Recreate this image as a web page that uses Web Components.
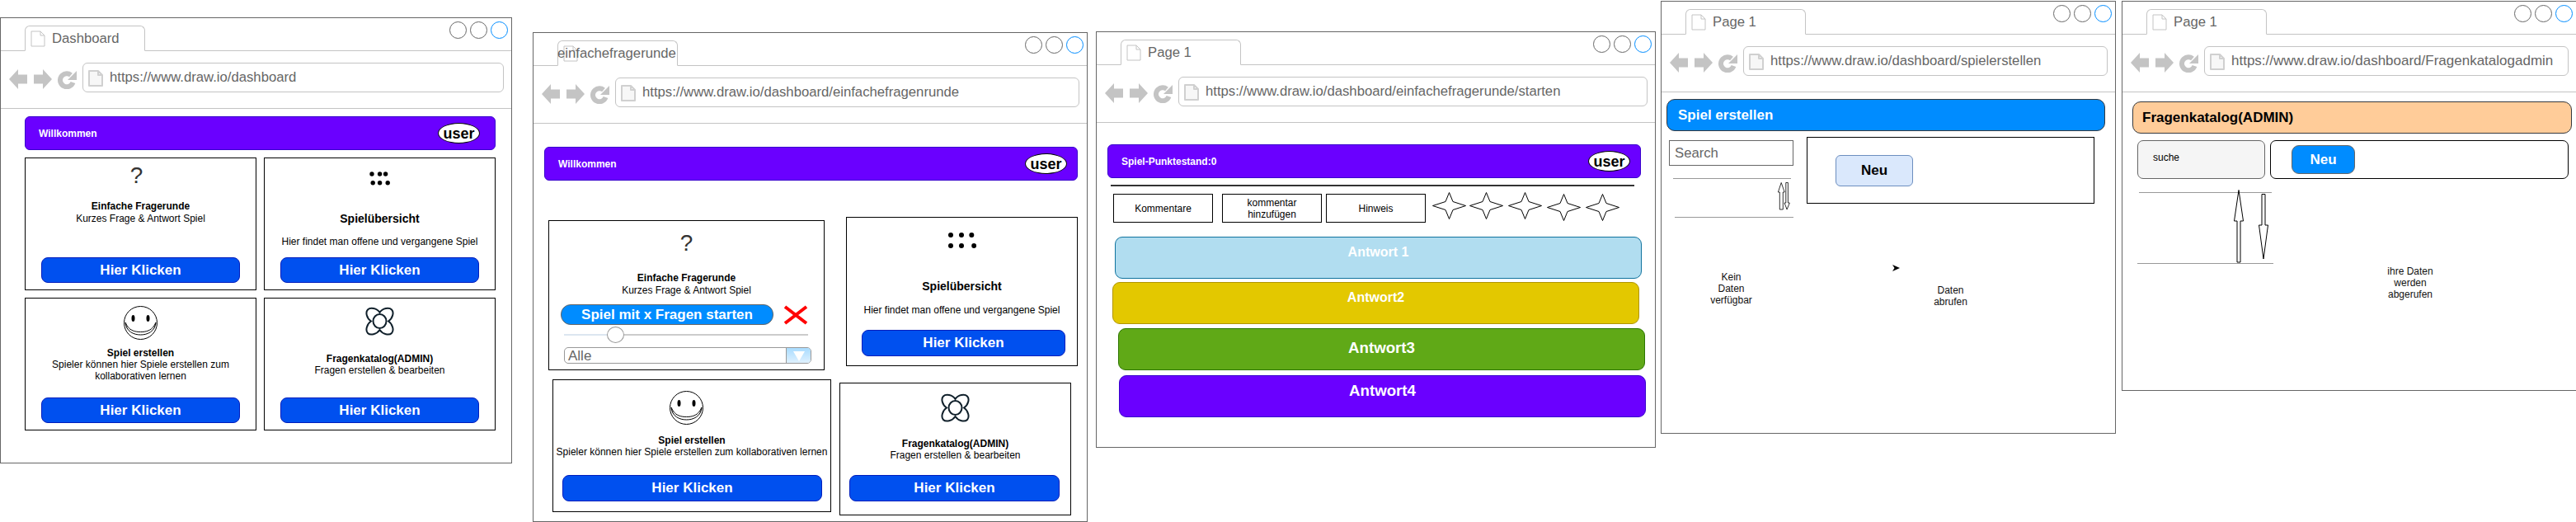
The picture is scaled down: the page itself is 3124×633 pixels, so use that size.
<!DOCTYPE html>
<html lang="de">
  <head>
    <meta charset="UTF-8">
    <title>Wireframes</title>
    <style>
      html, body { margin: 0; height: 633px; overflow: hidden; background: #fff; }
      body { position: relative; font: 12px/14px "Liberation Sans", Arial, sans-serif; color: #000; }
      .row { display: flex; align-items: flex-start; }
    </style>
    <script>
      const sheet = `
        :host { box-sizing: border-box; }
        *, *::before, *::after { box-sizing: border-box; }
      `;
      const page = (stroke, width, fill) => `
        <svg width="18" height="20" viewBox="0 0 18 20">
          <path d="M1 1H12L17 6V19H1Z M12 1V6H17" fill="${fill}" stroke="${stroke}" stroke-width="${width}" stroke-linejoin="round"/>
        </svg>`;

      // tiny base class, every element here is just a template in an open shadow root
      const element = (name, html) => customElements.define(name, class extends HTMLElement {
        constructor() {
          super();
          this.attachShadow({ mode: 'open' }).innerHTML = `<style>${sheet}</style>` + html;
        }
      });

      customElements.define('desk-window', class extends HTMLElement {
        constructor() {
          super();
          this.attachShadow({ mode: 'open' }).innerHTML = `
            <style>
              ${sheet}
              :host {
                position: absolute;
                left: var(--win-x); top: var(--win-y); width: var(--win-w); height: var(--win-h);
                display: flex; flex-direction: column;
                border: 1px solid #666; background: #fff;
              }
              .tabs { display: flex; height: 40px; border-bottom: 1px solid #c4c4c4; flex: none; }
              .tab {
                display: flex; align-items: center;
                margin: 9px 0 0 29px; padding-left: 6px;
                width: 146px; height: 31px;
                border: 1px solid #c4c4c4; border-bottom-color: #fff; border-radius: 6px 6px 0 0;
                font-size: 16.7px; color: #666; white-space: nowrap;
              }
              .tab span { margin-left: var(--tab-gap, 8px); }
              .dots { display: flex; gap: 4px; margin: 4px 4px 0 auto; }
              .dots i { width: 21px; height: 21px; border: 1px solid #666; border-radius: 50%; }
              .dots i:last-child { border-color: #008cff; }
              .bar { display: flex; align-items: flex-start; height: 70px; padding: 14px 9px 0 10px; border-bottom: 1px solid #c4c4c4; flex: none; }
              .nav { margin: 8px 6px 0 0; flex: none; }
              .url {
                flex: 1; display: flex; align-items: center; gap: 8px;
                height: 36px; padding: 0 6px; margin-left: 0;
                border: 1px solid #c4c4c4; border-radius: 6px;
                font-size: var(--url-size, 16.7px); color: #666; white-space: nowrap;
              }
              .url svg { margin-top: 2px; flex: none; }
              main { flex: 1; display: block; }
            </style>
            <div class="tabs">
              <div class="tab">${page('#c4c4c4', 1, '#fff')}<span></span></div>
              <div class="dots"><i></i><i></i><i></i></div>
            </div>
            <div class="bar">
              <svg class="nav" width="83" height="24" viewBox="0 0 83 24" fill="#c4c4c4">
                <path d="M0 12 11 0V6.500H22V17.500H11V24Z"/>
                <path d="M52 12 41 0V6.500H30V17.500H41V24Z"/>
                <path d="M77.500 16A8 8 0 1 1 75 7" fill="none" stroke="#c4c4c4" stroke-width="6"/>
                <path d="M82 2V13H71Z"/>
              </svg>
              <div class="url">${page('#d0d0d0', 2, '#f7f7f7')}<span></span></div>
            </div>
            <main><slot></slot></main>
          `;
        }
        connectedCallback() {
          this.shadowRoot.querySelector('.tab span').textContent = this.getAttribute('tab');
          this.shadowRoot.querySelector('.url span').textContent = this.getAttribute('url');
        }
      });

      element('top-banner', `
        <style>
          :host {
            display: flex; align-items: center; justify-content: space-between;
            height: var(--h, 41px);
            padding: 0 var(--pr, 18px) 0 var(--pl, 16px);
            background: var(--bg, #6a00ff);
            border: 1px solid var(--bd, #3700cc);
            border-radius: var(--r, 6px);
            color: var(--fg, #fff);
            font-weight: bold; font-size: var(--fs, 12px); white-space: nowrap;
          }
        </style>
        <slot></slot><slot name="end"></slot>
      `);

      element('user-badge', `
        <style>
          :host {
            display: flex; align-items: center; justify-content: center;
            width: 51px; height: 25px;
            background: #fff; border: 1px solid #000; border-radius: 50%;
            color: #000; font-size: 18px; font-weight: bold;
          }
        </style>
        <slot></slot>
      `);

      element('click-button', `
        <style>
          :host {
            display: flex; align-items: center; justify-content: center;
            width: var(--bw, 241px); height: var(--bh, 31px);
            margin-left: var(--bx, 19px);
            background: #0050ef; border: 1px solid #001dbc; border-radius: 8px;
            color: #fff; font-size: 17px; font-weight: bold;
          }
        </style>
        <slot>Hier Klicken</slot>
      `);

      element('feature-card', `
        <style>
          :host {
            display: flex; flex-direction: column; flex: none;
            width: var(--w); height: var(--h);
            border: 1px solid #000; background: #fff;
            text-align: center;
          }
          .head { height: var(--head); padding-top: var(--it); display: flex; justify-content: center; flex: none; }
          slot[name=title] { display: block; font-weight: bold; font-size: var(--ts, 12px); line-height: 14px; }
          .body { display: block; margin-top: var(--gap, 0); line-height: 14px; }
          .action { margin-top: auto; padding-bottom: var(--pb, 8px); }
        </style>
        <div class="head"><slot name="icon"></slot></div>
        <slot name="title"></slot>
        <div class="body"><slot></slot></div>
        <div class="action"><slot name="action"><click-button></click-button></slot></div>
      `);

      element('quest-mark', `
        <style>:host { display: block; font-size: 28px; line-height: 29px; height: 29px; color: #333; }</style>?
      `);

      element('dot-grid', `
        <style>:host { display: block; height: 17px; } svg { display: block; }</style>
        <svg width="25" height="17"><g fill="#000">
          <circle cx="3" cy="3" r="2.700"/><circle cx="12.600" cy="3" r="2.700"/><circle cx="19.600" cy="3" r="2.700"/>
          <circle cx="4.200" cy="13.700" r="2.700"/><circle cx="12.600" cy="13.700" r="2.700"/><circle cx="22.200" cy="13.700" r="2.700"/>
        </g></svg>
      `);

      element('dot-grid-wide', `
        <style>:host { display: block; height: 19px; } svg { display: block; }</style>
        <svg width="34" height="19"><g fill="#000">
          <circle cx="3" cy="3" r="3"/><circle cx="16" cy="3" r="3"/><circle cx="28.300" cy="3" r="3"/>
          <circle cx="3" cy="16" r="3"/><circle cx="16" cy="16" r="3"/><circle cx="31.200" cy="16" r="3"/>
        </g></svg>
      `);

      element('smile-face', `
        <style>:host { display: block; height: 41px; } svg { display: block; }</style>
        <svg width="41" height="41" viewBox="0 0 41 41" fill="none" stroke="#000">
          <ellipse cx="20.500" cy="20.500" rx="20" ry="20"/>
          <ellipse cx="11.500" cy="15" rx="2" ry="4" fill="#000" stroke="none"/>
          <ellipse cx="29.500" cy="15" rx="2" ry="4" fill="#000" stroke="none"/>
          <path d="M2 20C3 31 12 35 20.500 35S38 31 39 20"/>
          <path d="M2 20 4 24C8 30 14 31.500 20.500 31.500S33 30 37 24L39 20"/>
        </svg>
      `);

      element('clover-mark', `
        <style>:host { display: block; height: 35px; } svg { display: block; }</style>
        <svg width="35" height="35" viewBox="0 0 35 35" fill="none" stroke="#10202b" stroke-width="2">
          <path d="M17.500 7C14 1.500 6 .5 3 3.500S1.500 14 7 17.500C1.500 21 0 29 3 32S14 33.500 17.500 28C21 33.500 29 35 32 32S33.500 21 28 17.500C33.500 14 35 6.500 32 3.500S21 1.500 17.500 7Z"/>
          <ellipse cx="17.500" cy="17.500" rx="8" ry="8.500"/>
        </svg>
      `);

      element('quiz-start', `
        <style>
          :host { display: block; padding-left: 14px; margin-bottom: -1px; }
          .go { display: flex; align-items: center; }
          .start {
            display: flex; align-items: center; justify-content: center;
            width: 258px; height: 25px;
            background: #008cff; border: 1px solid #666; border-radius: 12px;
            color: #fff; font-size: 17px; font-weight: bold; white-space: nowrap;
          }
          .go svg { margin-left: 12px; }
          .slider { position: relative; width: 296px; height: 20px; margin: 2px 0 0 4px; }
          .slider::before { content: ""; position: absolute; left: 0; right: 0; top: 9px; height: 2px; background: #ccc; }
          .slider::after { content: ""; position: absolute; left: 0; width: 52px; top: 9px; height: 2px; background: #dce6f0; }
          .slider i { position: absolute; z-index: 1; left: 52px; top: 0; width: 21px; height: 20px; background: #fff; border: 1px solid #999; border-radius: 50%; }
          .select {
            display: flex; width: 300px; height: 20px; margin: 5px 0 0 4px;
            border: 1px solid #999; border-radius: 5px; overflow: hidden;
            color: #666; font-size: 17px; line-height: 20px; text-align: left;
          }
          .select span { flex: 1; padding-left: 4px; }
          .select b { width: 30px; border-left: 1px solid #999; background: linear-gradient(#a9dcff, #dff1ff); display: flex; align-items: center; justify-content: center; }
        </style>
        <div class="go">
          <div class="start"><slot></slot></div>
          <svg width="30" height="24" viewBox="0 0 30 24"><path d="M2 2 28 22M28 2 2 22" stroke="#f00" stroke-width="4"/></svg>
        </div>
        <div class="slider"><i></i></div>
        <div class="select"><span>Alle</span><b><svg width="16" height="13"><path d="M1 1H15L8 13Z" fill="#fff"/></svg></b></div>
      `);

      element('small-box', `
        <style>
          :host {
            display: flex; align-items: center; justify-content: center;
            width: 121px; height: 35px; flex: none;
            border: 1px solid #000; text-align: center;
          }
        </style>
        <slot></slot>
      `);

      element('four-star', `
        <style>:host { display: block; flex: none; height: 32px; } svg { display: block; }</style>
        <svg width="41" height="33" viewBox="0 0 41 33"><path d="M20.500 .5 25 11.500 40.500 16.500 25 21.500 20.500 32.500 16 21.500 .5 16.500 16 11.500Z" fill="#fff" stroke="#000"/></svg>
      `);

      element('answer-row', `
        <style>
          :host {
            display: block; flex: none;
            width: 639px; height: 51px;
            padding-top: var(--pt, 9px);
            background: var(--bg); border: 1px solid var(--bd); border-radius: 9px;
            color: #fff; font-weight: bold; font-size: var(--fs, 16px); line-height: var(--lh, 18px);
            text-align: center;
          }
        </style>
        <slot></slot>
      `);

      element('search-field', `
        <style>
          :host {
            display: flex; align-items: center;
            width: 151px; height: 31px; padding-left: 6px;
            border: 1px solid #666; background: #fff;
            color: #666; font-size: 16.7px;
          }
        </style>
        <slot></slot>
      `);

      element('sort-list', `
        <style>
          :host { display: block; position: relative; width: var(--w); height: var(--h); flex: none; }
          i { position: absolute; height: 1px; background: #999; }
          .top { top: 0; left: var(--tl); width: var(--tw); }
          .bottom { bottom: 0; left: var(--bl); width: var(--bw); }
          ::slotted(svg) { position: absolute; }
        </style>
        <i class="top"></i><slot></slot><i class="bottom"></i>
      `);

      element('new-button', `
        <style>
          :host {
            display: flex; align-items: center; justify-content: center;
            width: var(--bw); height: var(--bh);
            margin: var(--bm);
            background: var(--bg); border: 1px solid var(--bd); border-radius: var(--r, 6px);
            color: var(--fg); font-size: 17px; font-weight: bold;
          }
        </style>
        <slot></slot>
      `);

      element('note-text', `
        <style>:host { display: block; text-align: center; line-height: 14px; color: #111; }</style>
        <slot></slot>
      `);
    </script>
  </head>
  <body>
    <desk-window tab="Dashboard" url="https://www.draw.io/dashboard" style="--win-x:0px;--win-y:21px;--win-w:621px;--win-h:541px">
      <div style="padding:9px 0 0 29px;width:600px;box-sizing:border-box;display:grid;grid-template-columns:281px 281px;gap:9px 9px">
        <top-banner style="grid-column:1/3;width:571px">Willkommen<user-badge slot="end">user</user-badge></top-banner>
        <feature-card style="--w:281px;--h:161px;--it:6px;--head:51px;--gap:1px">
          <quest-mark slot="icon" style="margin-right:10px"></quest-mark>
          <span slot="title">Einfache Fragerunde</span>Kurzes Frage &amp; Antwort Spiel
        </feature-card>
        <feature-card style="--w:281px;--h:161px;--it:16px;--head:66px;--gap:14px;--ts:14px">
          <dot-grid slot="icon"></dot-grid>
          <span slot="title">Spielübersicht</span>Hier findet man offene und vergangene Spiel
        </feature-card>
        <feature-card style="--w:281px;--h:161px;--it:9px;--head:59px">
          <smile-face slot="icon"></smile-face>
          <span slot="title">Spiel erstellen</span>Spieler können hier Spiele erstellen zum kollaborativen lernen
        </feature-card>
        <feature-card style="--w:281px;--h:161px;--it:10px;--head:66px">
          <clover-mark slot="icon"></clover-mark>
          <span slot="title">Fragenkatalog(ADMIN)</span>Fragen erstellen &amp; bearbeiten
        </feature-card>
      </div>
    </desk-window>

    <desk-window tab="einfachefragerunde" url="https://www.draw.io/dashboard/einfachefragenrunde" style="--win-x:646px;--win-y:39px;--win-w:673px;--win-h:594px;--tab-gap:-25px">
      <top-banner style="margin:28px 0 0 13px;width:647px;--pr:12px">Willkommen<user-badge slot="end">user</user-badge></top-banner>
      <div class="row" style="margin:44px 0 0 18px">
        <feature-card style="--w:335px;--h:182px;--it:12px;--head:62px;--gap:1px;margin-top:4px">
          <quest-mark slot="icon"></quest-mark>
          <span slot="title">Einfache Fragerunde</span>Kurzes Frage &amp; Antwort Spiel
          <quiz-start slot="action">Spiel mit x Fragen starten</quiz-start>
        </feature-card>
        <feature-card style="--w:281px;--h:181px;--it:18px;--head:76px;--gap:15px;--ts:14px;--pb:11px;margin-left:26px">
          <dot-grid-wide slot="icon"></dot-grid-wide>
          <span slot="title">Spielübersicht</span>Hier findet man offene und vergangene Spiel
          <click-button slot="action" style="--bw:247px;--bh:32px;--bx:18px"></click-button>
        </feature-card>
      </div>
      <div class="row" style="margin:11px 0 0 23px">
        <feature-card style="--w:338px;--h:161px;--it:13px;--head:66px;--pb:12px">
          <smile-face slot="icon" style="margin-right:13px"></smile-face>
          <span slot="title">Spiel erstellen</span>Spieler können hier Spiele erstellen zum kollaborativen lernen
          <click-button slot="action" style="--bw:315px;--bh:32px;--bx:11px"></click-button>
        </feature-card>
        <feature-card style="--w:281px;--h:161px;--it:12px;--head:66px;--pb:16px;margin:4px 0 0 10px">
          <clover-mark slot="icon"></clover-mark>
          <span slot="title">Fragenkatalog(ADMIN)</span>Fragen erstellen &amp; bearbeiten
          <click-button slot="action" style="--bw:255px;--bh:32px;--bx:11px"></click-button>
        </feature-card>
      </div>
    </desk-window>

    <desk-window tab="Page 1" url="https://www.draw.io/dashboard/einfachefragerunde/starten" style="--win-x:1329px;--win-y:38px;--win-w:679px;--win-h:505px">
      <top-banner style="margin:26px 0 0 13px;width:647px;--pr:12px">Spiel-Punktestand:0<user-badge slot="end">user</user-badge></top-banner>
      <div style="margin:8px 0 0 17px;width:635px;height:2px;background:#333"></div>
      <div class="row" style="margin:9px 0 0 20px">
        <small-box>Kommentare</small-box>
        <small-box style="margin-left:11px">kommentar<br>hinzufügen</small-box>
        <small-box style="margin-left:5px">Hinweis</small-box>
        <four-star style="margin:-2px 0 0 8px"></four-star>
        <four-star style="margin:-2px 0 0 4px"></four-star>
        <four-star style="margin:-2px 0 0 6px"></four-star>
        <four-star style="margin:0 0 0 6px"></four-star>
        <four-star style="margin:0 0 0 6px"></four-star>
      </div>
      <answer-row style="margin:17px 0 0 22px;--bg:#b1ddf0;--bd:#10739e">Antwort 1</answer-row>
      <answer-row style="margin:4px 0 0 19px;--bg:#e3c800;--bd:#b09500">Antwort2</answer-row>
      <answer-row style="margin:5px 0 0 26px;--bg:#60a917;--bd:#2d7600;--fs:18.700px;--lh:22px;--pt:12px">Antwort3</answer-row>
      <answer-row style="margin:6px 0 0 27px;--bg:#6a00ff;--bd:#3700cc;--fs:18.700px;--lh:22px;--pt:7px">Antwort4</answer-row>
    </desk-window>

    <desk-window tab="Page 1" url="https://www.draw.io/dashboard/spielerstellen" style="--win-x:2014px;--win-y:1px;--win-w:552px;--win-h:525px">
      <top-banner style="margin:8px 0 0 6px;width:532px;--h:39px;--bg:#008cff;--bd:#36393d;--r:10px;--fs:17px;--pl:13px">Spiel erstellen</top-banner>
      <div class="row" style="margin:7px 0 0 9px">
        <div style="width:151px;margin-top:4px;flex:none">
          <search-field>Search</search-field>
          <sort-list style="margin-top:15px;--w:151px;--h:48px;--tl:5px;--tw:143px;--bl:7px;--bw:144px">
            <svg style="left:132px;top:5px" width="15" height="34" viewBox="0 0 15 34" fill="#fff" stroke="#000" stroke-width=".8">
              <path d="M4.200 .5 8.200 12H6.300V33H2.300V12H.4Z"/>
              <path d="M9.800 .5H12.400V25H14.300L11.100 33 8 25H9.800Z"/>
            </svg>
          </sort-list>
          <note-text style="margin-top:65px">Kein<br>Daten<br>verfügbar</note-text>
        </div>
        <div style="width:349px;margin-left:16px;flex:none">
          <div style="height:81px;border:1px solid #000;box-sizing:border-box;padding-top:21px">
            <new-button style="--bw:94px;--bh:38px;--bm:0 0 0 34px;--bg:#dae8fc;--bd:#6c8ebf;--fg:#000">Neu</new-button>
          </div>
          <svg style="display:block;margin:74px 0 0 104px" width="9" height="8" viewBox="0 0 9 8"><path d="M0 0 9 4 0 8 2.500 4Z" fill="#000"/></svg>
          <note-text style="margin-top:16px">Daten<br>abrufen</note-text>
        </div>
      </div>
    </desk-window>

    <desk-window tab="Page 1" url="https://www.draw.io/dashboard/Fragenkatalogadmin" style="--win-x:2573px;--win-y:1px;--win-w:552px;--win-h:473px;--url-size:17px">
      <top-banner style="margin:11px 0 0 12px;width:533px;--h:39px;--bg:#ffcc99;--bd:#36393d;--fg:#000;--r:10px;--fs:17px;--pl:11px">Fragenkatalog(ADMIN)</top-banner>
      <div class="row" style="margin:8px 0 0 18px">
        <div style="width:155px;height:47px;flex:none;box-sizing:border-box;display:flex;align-items:center;padding:0 0 6px 18px;background:#f5f5f5;border:1px solid #666;border-radius:7px">suche</div>
        <div style="width:362px;height:47px;flex:none;box-sizing:border-box;margin-left:6px;padding:5px 0 0 25px;border:1px solid #000;border-radius:7px">
          <new-button style="--bw:77px;--bh:35px;--bm:0;--bg:#008cff;--bd:#666;--fg:#fff;--r:9px">Neu</new-button>
        </div>
      </div>
      <div class="row" style="margin:16px 0 0 18px">
        <sort-list style="--w:165px;--h:87px;--tl:2px;--tw:161px;--bl:0px;--bw:165px">
          <svg style="left:117px;top:-3px" width="43" height="90" viewBox="0 0 43 90" fill="#fff" stroke="#000">
            <path d="M6 .5 11.500 38H8V88H4V38H.5Z"/>
            <path d="M34 5.500H38V43H41.500L36 84 30.500 43H34Z"/>
          </svg>
        </sort-list>
        <note-text style="width:332px;margin-top:89px;flex:none">ihre Daten<br>werden<br>abgerufen</note-text>
      </div>
    </desk-window>
  </body>
</html>
